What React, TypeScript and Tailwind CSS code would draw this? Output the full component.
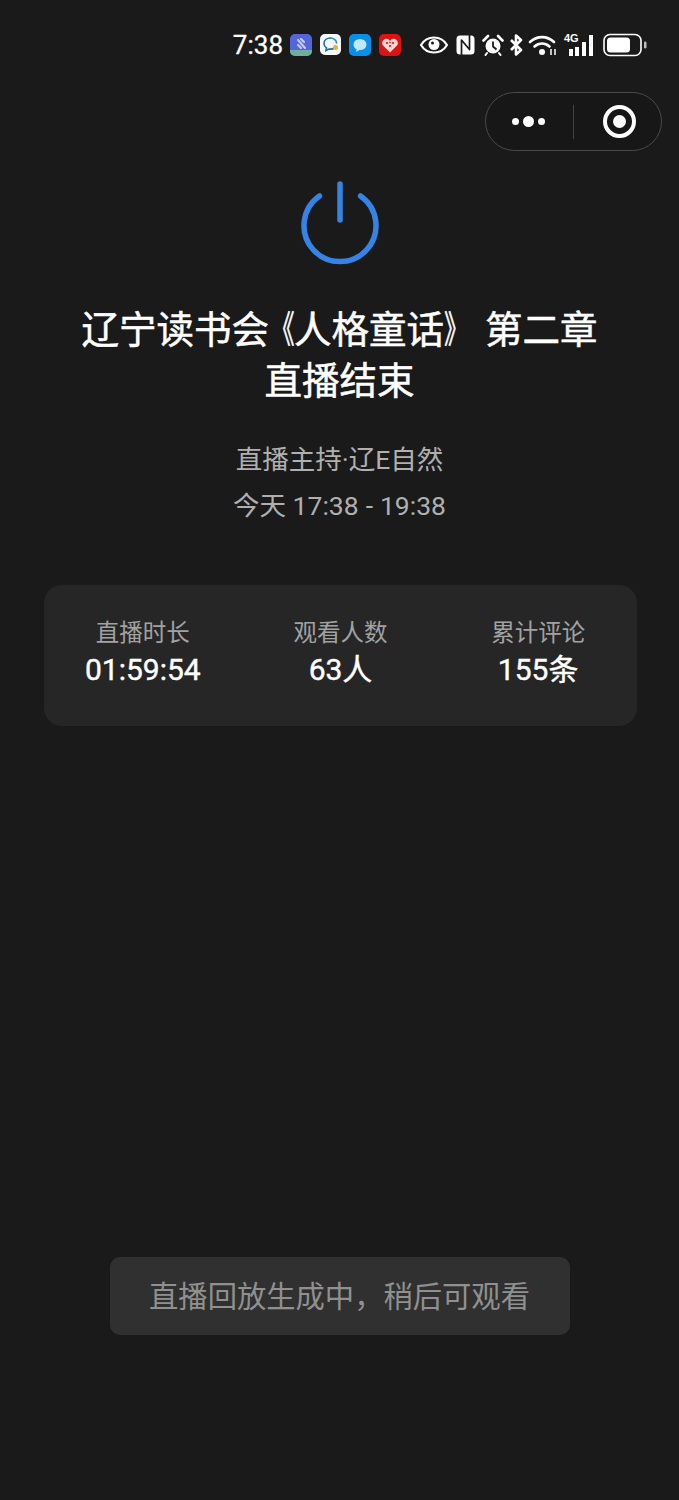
const cjk = { fontFamily: '"Noto Sans CJK SC", "Noto Sans", sans-serif' };
const latinFirst = { fontFamily: 'Roboto, "Noto Sans CJK SC", sans-serif' };

function AppIcons() {
  return (
    <div className="flex items-center gap-[8px]">
      <svg width="22" height="22" viewBox="0 0 22 22">
        <rect width="22" height="22" rx="5" fill="#5566dd" />
        <path d="M0 16h22v1a5 5 0 0 1-5 5H5a5 5 0 0 1-5-5z" fill="#6fae9a" />
        <path d="M8 6l7 8M11 5l3 3M8 11l3 3" stroke="#c8d0fa" strokeWidth="2" strokeLinecap="round" />
      </svg>
      <svg width="21" height="21" viewBox="0 0 21 21">
        <rect width="21" height="21" rx="5" fill="#f7f8f8" />
        <path d="M10.5 4c-4 0-6.500 2.500-6.500 5.500 0 2 1 3.500 2.500 4.500l-.5 2.500 3-1.500c2 .3 4 0 5.500-1" fill="none" stroke="#1f6f9f" strokeWidth="1.600" strokeLinecap="round" />
        <path d="M10.500 4c3.500 0 6 2.500 6 5" fill="none" stroke="#2f8fc0" strokeWidth="1.600" strokeLinecap="round" />
        <circle cx="15.500" cy="13.500" r="2.500" fill="#e8b23c" />
      </svg>
      <svg width="22" height="22" viewBox="0 0 22 22">
        <rect width="22" height="22" rx="5" fill="#0b8fe8" />
        <ellipse cx="11" cy="10.500" rx="6.500" ry="5.500" fill="#bfe8fb" />
        <path d="M8 14l-1 4 5-3z" fill="#bfe8fb" />
      </svg>
      <svg width="22" height="22" viewBox="0 0 22 22">
        <rect width="22" height="22" rx="5" fill="#d81414" />
        <path d="M11 18.500l-6.500-6.500a4 4 0 0 1 0-6 4 4 0 0 1 6.500 1 4 4 0 0 1 6.500-1 4 4 0 0 1 0 6z" fill="#f6d5d5" />
        <circle cx="8" cy="9" r="1.100" fill="#d81414" />
        <circle cx="11" cy="12" r="1.100" fill="#d81414" />
        <circle cx="14" cy="9" r="1.100" fill="#d81414" />
        <circle cx="11" cy="8.500" r="0.800" fill="#d81414" />
      </svg>
    </div>
  );
}

function SystemIcons() {
  return (
    <div className="flex items-center">
      <svg width="28" height="18" viewBox="0 0 28 18" className="mr-[8px]">
        <path d="M1 9c3-5 8-7.500 13-7.500S24 4 27 9c-3 5-8 7.500-13 7.500S4 14 1 9z" fill="none" stroke="#fff" strokeWidth="2.200" />
        <circle cx="14" cy="8.500" r="5.500" fill="#fff" />
        <circle cx="12.500" cy="7" r="1.500" fill="#1a1a1a" />
      </svg>
      <svg width="19" height="20" viewBox="0 0 19 20" className="mr-[7px]">
        <rect x="0.500" y="0.500" width="18" height="19" rx="3.500" fill="#fff" />
        <path d="M5.500 20V5l8 9.500V0" fill="none" stroke="#1a1a1a" strokeWidth="1.700" strokeLinejoin="round" />
      </svg>
      <svg width="22" height="22" viewBox="0 0 22 22" className="mr-[5px]">
        <circle cx="11" cy="12" r="7.500" fill="#fff" />
        <path d="M11 7.500V12.500l3.500 3" fill="none" stroke="#1a1a1a" strokeWidth="1.800" />
        <path d="M1.500 6.500L6 2M20.500 6.500L16 2" stroke="#fff" strokeWidth="2.600" strokeLinecap="round" />
        <path d="M5 19l-1.500 2M17 19l1.500 2" stroke="#fff" strokeWidth="2" strokeLinecap="round" />
      </svg>
      <svg width="14" height="22" viewBox="0 0 14 22" className="mr-[5px]">
        <path d="M2 6l10 10-5 4.500V1.500L12 6 2 16" fill="none" stroke="#fff" strokeWidth="2.600" strokeLinejoin="round" />
      </svg>
      <svg width="30" height="22" viewBox="0 0 30 22" className="mr-[6px]">
        <path d="M2 8c7-6.500 17-6.500 24 0" fill="none" stroke="#fff" strokeWidth="2.600" strokeLinecap="round" />
        <path d="M6.500 12.500c4.500-4 10.500-4 15 0" fill="none" stroke="#fff" strokeWidth="2.600" strokeLinecap="round" />
        <circle cx="14" cy="18" r="3" fill="#fff" />
        <path d="M23 15v6M27 15v6" stroke="#fff" strokeWidth="1.500" />
      </svg>
      <div className="relative w-[32px] h-[22px] mr-[7px]">
        <span className="absolute left-0 top-[-3px] text-[11px] leading-[14px] font-bold text-white" style={{ fontFamily: '"Liberation Sans", sans-serif' }}>4G</span>
        <svg width="32" height="22" viewBox="0 0 32 22" className="absolute inset-0">
          <rect x="5" y="15" width="4" height="7" fill="#fff" />
          <rect x="11" y="13" width="4" height="9" fill="#fff" />
          <rect x="18" y="8" width="4" height="14" fill="#fff" />
          <rect x="25" y="1" width="4" height="21" fill="#fff" />
        </svg>
      </div>
      <svg width="44" height="24" viewBox="0 0 44 24">
        <rect x="1" y="1.500" width="37" height="21" rx="6" fill="none" stroke="#fff" strokeWidth="1.600" />
        <rect x="4" y="4.500" width="23" height="15" rx="3.500" fill="#fff" />
        <rect x="41" y="8.500" width="2.500" height="7" rx="1.200" fill="#bbb" />
      </svg>
    </div>
  );
}

function StatItem({ label, value }: { label: string; value: string }) {
  return (
    <div className="flex flex-col items-center">
      <div className="text-[23.500px] leading-[32px] text-[#a2a2a2]">{label}</div>
      <div className="mt-[2px] text-[30px] leading-[42px] text-white [-webkit-text-stroke:0.4px_#fff]" style={latinFirst}>{value}</div>
    </div>
  );
}

export default function App() {
  return (
    <div className="min-h-[1500px] bg-[#1a1a1a] flex flex-col items-center" style={cjk}>
      <div className="w-full flex items-center justify-end pt-[29px] pr-[32px] h-[92px] pb-[32px]">
        <span className="text-[26px] leading-[32px] text-white mr-[7px] [-webkit-text-stroke:0.3px_#fff]" style={{ fontFamily: 'Roboto, sans-serif' }}>7:38</span>
        <AppIcons />
        <div className="w-[19px]" />
        <SystemIcons />
      </div>

      <div className="w-full flex justify-end pr-[17px]">
        <div className="w-[177px] h-[59px] rounded-full border border-[#4a4a4a] bg-[#171717] flex items-center">
          <div className="w-[87px] flex items-center justify-center gap-[4px] pr-[3px]">
            <span className="w-[7px] h-[7px] rounded-full bg-white" />
            <span className="w-[11px] h-[11px] rounded-full bg-white" />
            <span className="w-[7px] h-[7px] rounded-full bg-white" />
          </div>
          <div className="w-px h-[34px] bg-[#444]" />
          <div className="flex-1 flex items-center justify-center pl-[3px]">
            <div className="w-[33px] h-[33px] rounded-full border-[4px] border-white flex items-center justify-center">
              <div className="w-[13px] h-[13px] rounded-full bg-white" />
            </div>
          </div>
        </div>
      </div>

      <svg width="80" height="86" viewBox="0 0 80 86" className="mt-[29px]">
        <path d="M40 4v36" stroke="#3683e6" strokeWidth="5.500" strokeLinecap="round" fill="none" />
        <path d="M19.500 16a36 36 0 1 0 41 0" stroke="#3683e6" strokeWidth="5.500" strokeLinecap="round" fill="none" />
      </svg>

      <div className="mt-[35px] text-[37.500px] leading-[51px] text-white text-center whitespace-nowrap [-webkit-text-stroke:0.5px_#fff]">
        <div>
          辽宁读书会
          <span className="inline-block ml-[-12.500px] origin-right scale-x-[0.65]">《</span>
          人格童话
          <span className="inline-block mr-[-34px] origin-left scale-x-[0.65]">》</span>
          <span className="inline-block w-[37.500px]" />
          第二章
        </div>
        <div>直播结束</div>
      </div>

      <div className="mt-[34px] text-[26.500px] leading-[46px] text-[#b0b0b0] text-center" style={latinFirst}>
        <div>直播主持·辽E自然</div>
        <div>
          今天 17:38<span className="mx-[7px]">-</span>19:38
        </div>
      </div>

      <div className="mt-[56px] ml-[2px] w-[593px] h-[141px] pb-[6px] rounded-[18px] bg-[#262626] grid grid-cols-3 items-center">
        <StatItem label="直播时长" value="01:59:54" />
        <StatItem label="观看人数" value="63人" />
        <StatItem label="累计评论" value="155条" />
      </div>

      <div className="mt-[531px] w-[460px] h-[78px] pb-[2px] rounded-[10px] bg-[#303030] flex items-center justify-center text-[29.300px] text-[#909090]">
        直播回放生成中，稍后可观看
      </div>
    </div>
  );
}
